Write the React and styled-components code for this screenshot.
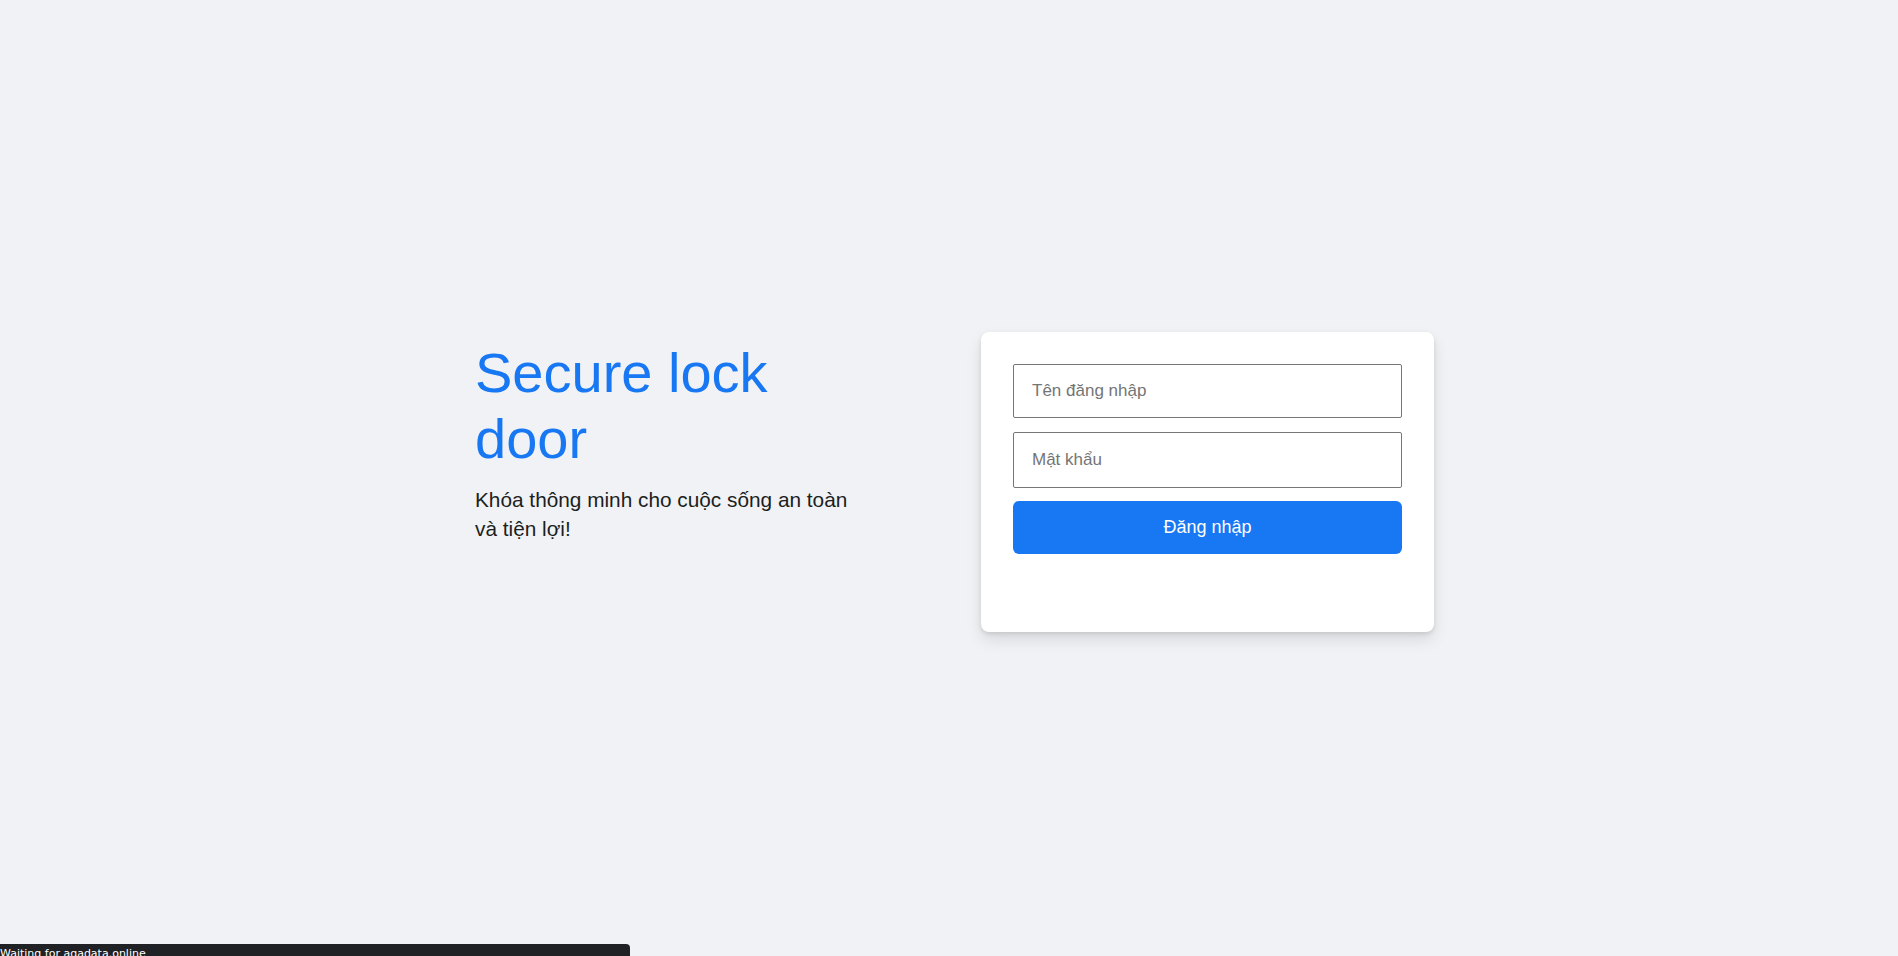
import React from 'react';
import styled, { createGlobalStyle } from 'styled-components';

const GlobalStyle = createGlobalStyle`
  * {
    box-sizing: border-box;
  }
  html, body {
    margin: 0;
    padding: 0;
    background: #f0f2f5;
    font-family: "Liberation Sans", Arial, sans-serif;
  }
`;

const Page = styled.div`
  min-height: 100vh;
  padding-top: 8px;
  display: flex;
  align-items: center;
  justify-content: center;
`;

const Row = styled.div`
  width: 980px;
  display: grid;
  grid-template-columns: 522px 453px;
  align-items: start;
`;

const Intro = styled.div`
  padding: 8px 16px 0;
`;

const Title = styled.h1`
  margin: 0;
  max-width: 385px;
  font-size: 56px;
  line-height: 66px;
  font-weight: 400;
  color: #1877f2;
`;

const Slogan = styled.p`
  margin: 13px 0 0;
  max-width: 385px;
  font-size: 20.8px;
  line-height: 29px;
  color: #1c1e21;
`;

const Card = styled.form`
  min-height: 300px;
  padding: 32px;
  background: #fff;
  border-radius: 8px;
  box-shadow: 0 2px 4px rgba(0, 0, 0, 0.1), 0 8px 16px rgba(0, 0, 0, 0.1);
  display: flex;
  flex-direction: column;
`;

const Input = styled.input`
  height: ${(p) => p.$h}px;
  margin-bottom: ${(p) => p.$gap}px;
  padding: 0 18px;
  border: 1px solid #767676;
  border-radius: 2px;
  font-family: inherit;
  font-size: 17px;
  color: #1c1e21;
  background: #fff;
  outline: none;

  &::placeholder {
    color: #757575;
  }
`;

const Submit = styled.button`
  height: 53px;
  border: none;
  border-radius: 6px;
  background: #1877f2;
  color: #fff;
  font-family: inherit;
  font-size: 18px;
  cursor: pointer;
`;

const StatusBubble = styled.div`
  position: fixed;
  left: 0;
  top: 944px;
  width: 630px;
  height: 20px;
  padding: 3px 0 0 0;
  background: #202124;
  border-top-right-radius: 4px;
  color: #fff;
  font-family: "DejaVu Sans", sans-serif;
  font-size: 11px;
  line-height: 14px;
`;

export default function App() {
  return (
    <>
      <GlobalStyle />
      <Page>
        <Row>
          <Intro>
            <Title>Secure lock door</Title>
            <Slogan>Khóa thông minh cho cuộc sống an toàn và tiện lợi!</Slogan>
          </Intro>
          <Card onSubmit={(e) => e.preventDefault()}>
            <Input type="text" placeholder="Tên đăng nhập" $h={54} $gap={14} />
            <Input type="password" placeholder="Mật khẩu" $h={56} $gap={13} />
            <Submit type="submit">Đăng nhập</Submit>
          </Card>
        </Row>
      </Page>
      <StatusBubble>Waiting for agadata.online</StatusBubble>
    </>
  );
}
